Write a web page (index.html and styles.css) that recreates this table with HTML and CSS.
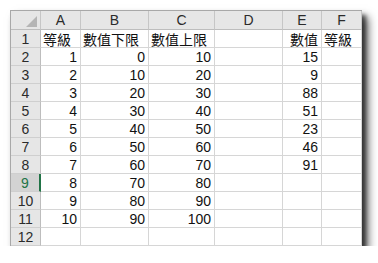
FILE: index.html
```html
<!DOCTYPE html>
<html>
<head>
<meta charset="utf-8">
<link rel="stylesheet" href="styles.css">
</head>
<body>
<div class="sheet">
  <div class="grid">
    <div class="hd corner"><span class="tri"></span></div>
    <div class="hd">A</div><div class="hd">B</div><div class="hd">C</div><div class="hd">D</div><div class="hd">E</div><div class="hd">F</div>

    <div class="rh">1</div><div class="c t">等級</div><div class="c t">數值下限</div><div class="c t">數值上限</div><div class="c"></div><div class="c tr">數值</div><div class="c t">等級</div>
    <div class="rh">2</div><div class="c n">1</div><div class="c n">0</div><div class="c n">10</div><div class="c"></div><div class="c n">15</div><div class="c"></div>
    <div class="rh">3</div><div class="c n">2</div><div class="c n">10</div><div class="c n">20</div><div class="c"></div><div class="c n">9</div><div class="c"></div>
    <div class="rh">4</div><div class="c n">3</div><div class="c n">20</div><div class="c n">30</div><div class="c"></div><div class="c n">88</div><div class="c"></div>
    <div class="rh">5</div><div class="c n">4</div><div class="c n">30</div><div class="c n">40</div><div class="c"></div><div class="c n">51</div><div class="c"></div>
    <div class="rh">6</div><div class="c n">5</div><div class="c n">40</div><div class="c n">50</div><div class="c"></div><div class="c n">23</div><div class="c"></div>
    <div class="rh">7</div><div class="c n">6</div><div class="c n">50</div><div class="c n">60</div><div class="c"></div><div class="c n">46</div><div class="c"></div>
    <div class="rh">8</div><div class="c n">7</div><div class="c n">60</div><div class="c n">70</div><div class="c"></div><div class="c n">91</div><div class="c"></div>
    <div class="rh active">9</div><div class="c n">8</div><div class="c n">70</div><div class="c n">80</div><div class="c"></div><div class="c"></div><div class="c"></div>
    <div class="rh">10</div><div class="c n">9</div><div class="c n">80</div><div class="c n">90</div><div class="c"></div><div class="c"></div><div class="c"></div>
    <div class="rh">11</div><div class="c n">10</div><div class="c n">90</div><div class="c n">100</div><div class="c"></div><div class="c"></div><div class="c"></div>
    <div class="rh">12</div><div class="c"></div><div class="c"></div><div class="c"></div><div class="c"></div><div class="c"></div><div class="c"></div>
  </div>
</div>
</body>
</html>
```
FILE: styles.css
```css
html, body {
  margin: 0;
  padding: 0;
  background: #ffffff;
}
body {
  padding: 10px 0 0 10px;
  font-family: "Liberation Sans", "Noto Sans CJK TC", sans-serif;
}
.sheet {
  width: 351px;
  border-left: 1px solid #a8a8a8;
  border-top: 1px solid #a8a8a8;
  background: #ffffff;
  box-shadow: 4px 5px 4px rgba(0, 0, 0, 0.55), 6px 7px 9px rgba(0, 0, 0, 0.6);
}
.grid {
  display: grid;
  grid-template-columns: 30px 40px 68px 66px 68px 39px 40px;
  grid-template-rows: 19px repeat(12, 18px);
}
.grid > div {
  box-sizing: border-box;
  border-right: 1px solid #d6d6d6;
  border-bottom: 1px solid #d6d6d6;
  display: flex;
  align-items: center;
  overflow: hidden;
  white-space: nowrap;
}
.grid > .hd {
  background: #e6e6e6;
  border-right-color: #c6c6c6;
  border-bottom-color: #bdbdbd;
  justify-content: center;
  color: #2b2b2b;
  font-size: 14px;
}
.corner {
  position: relative;
}
.tri {
  position: absolute;
  right: 3px;
  bottom: 2px;
  width: 0;
  height: 0;
  border-left: 11px solid transparent;
  border-bottom: 11px solid #b5b5b5;
}
.grid > .rh {
  background: #e6e6e6;
  border-right-color: #bdbdbd;
  border-bottom-color: #cfcfcf;
  justify-content: center;
  color: #2b2b2b;
  font-size: 14px;
}
.grid > .rh.active {
  background: #d3d3d3;
  color: #217346;
  border-right: 2px solid #217346;
}
.c {
  font-size: 14px;
  color: #111111;
}
.n {
  justify-content: flex-end;
  padding-right: 3px;
}
.t {
  justify-content: flex-start;
  padding-left: 2px;
  font-family: "Noto Sans CJK TC", sans-serif;
  font-size: 14px;
}
.tr {
  justify-content: flex-end;
  padding-right: 3px;
  font-family: "Noto Sans CJK TC", sans-serif;
  font-size: 14px;
}
```
